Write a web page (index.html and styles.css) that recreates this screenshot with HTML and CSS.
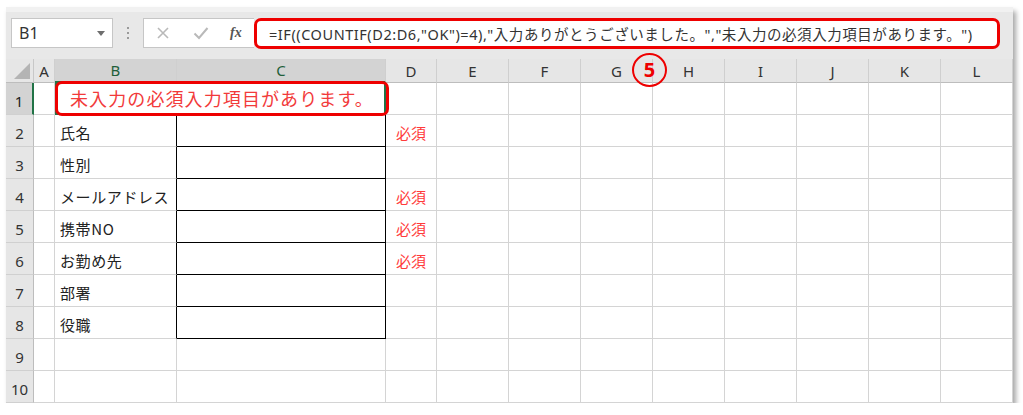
FILE: index.html
```html
<!DOCTYPE html>
<html lang="ja">
<head>
<meta charset="utf-8">
<title>Excel</title>
<link rel="stylesheet" href="styles.css">
</head>
<body>
<div class="win">
  <div class="toolbar">
    <div class="namebox"><span class="nb-text">B1</span><span class="nb-arrow"></span></div>
    <div class="sep"><span></span><span></span><span></span></div>
    <div class="fxbox">
      <svg class="ic" width="14" height="14" viewBox="0 0 14 14"><path d="M2 2 L12 12 M12 2 L2 12" stroke="#b9b9b9" stroke-width="1.6" fill="none"/></svg>
      <svg class="ic" width="16" height="14" viewBox="0 0 16 14"><path d="M1.5 7.5 L6 12 L14.5 2" stroke="#b9b9b9" stroke-width="2" fill="none"/></svg>
      <span class="fx">fx</span>
    </div>
    <div class="formula">=IF((COUNTIF(D2:D6,"OK")=4),"入力ありがとうございました。","未入力の必須入力項目があります。")</div>
  </div>
  <div class="sheet">
    <div class="corner"><span class="tri"></span></div>
    <div class="ch">A</div>
    <div class="ch sel">B</div>
    <div class="ch sel">C</div>
    <div class="ch">D</div>
    <div class="ch">E</div>
    <div class="ch">F</div>
    <div class="ch">G</div>
    <div class="ch">H</div>
    <div class="ch">I</div>
    <div class="ch">J</div>
    <div class="ch">K</div>
    <div class="ch">L</div>

    <div class="rh rsel">1</div>
    <div class="c"></div>
    <div class="c merged"><span class="msg">未入力の必須入力項目があります。</span><span class="redbox"></span></div>
    <div class="c"></div>
    <div class="c"></div><div class="c"></div><div class="c"></div><div class="c"></div><div class="c"></div><div class="c"></div><div class="c"></div><div class="c"></div>

    <div class="rh">2</div>
    <div class="c"></div><div class="c lbl">氏名</div><div class="c inp"></div><div class="c req">必須</div>
    <div class="c"></div><div class="c"></div><div class="c"></div><div class="c"></div><div class="c"></div><div class="c"></div><div class="c"></div><div class="c"></div>

    <div class="rh">3</div>
    <div class="c"></div><div class="c lbl">性別</div><div class="c inp"></div><div class="c"></div>
    <div class="c"></div><div class="c"></div><div class="c"></div><div class="c"></div><div class="c"></div><div class="c"></div><div class="c"></div><div class="c"></div>

    <div class="rh">4</div>
    <div class="c"></div><div class="c lbl">メールアドレス</div><div class="c inp"></div><div class="c req">必須</div>
    <div class="c"></div><div class="c"></div><div class="c"></div><div class="c"></div><div class="c"></div><div class="c"></div><div class="c"></div><div class="c"></div>

    <div class="rh">5</div>
    <div class="c"></div><div class="c lbl">携帯NO</div><div class="c inp"></div><div class="c req">必須</div>
    <div class="c"></div><div class="c"></div><div class="c"></div><div class="c"></div><div class="c"></div><div class="c"></div><div class="c"></div><div class="c"></div>

    <div class="rh">6</div>
    <div class="c"></div><div class="c lbl">お勤め先</div><div class="c inp"></div><div class="c req">必須</div>
    <div class="c"></div><div class="c"></div><div class="c"></div><div class="c"></div><div class="c"></div><div class="c"></div><div class="c"></div><div class="c"></div>

    <div class="rh">7</div>
    <div class="c"></div><div class="c lbl">部署</div><div class="c inp"></div><div class="c"></div>
    <div class="c"></div><div class="c"></div><div class="c"></div><div class="c"></div><div class="c"></div><div class="c"></div><div class="c"></div><div class="c"></div>

    <div class="rh">8</div>
    <div class="c"></div><div class="c lbl">役職</div><div class="c inp"></div><div class="c"></div>
    <div class="c"></div><div class="c"></div><div class="c"></div><div class="c"></div><div class="c"></div><div class="c"></div><div class="c"></div><div class="c"></div>

    <div class="rh">9</div>
    <div class="c"></div><div class="c"></div><div class="c"></div><div class="c"></div>
    <div class="c"></div><div class="c"></div><div class="c"></div><div class="c"></div><div class="c"></div><div class="c"></div><div class="c"></div><div class="c"></div>

    <div class="rh">10</div>
    <div class="c"></div><div class="c"></div><div class="c"></div><div class="c"></div>
    <div class="c"></div><div class="c"></div><div class="c"></div><div class="c"></div><div class="c"></div><div class="c"></div><div class="c"></div><div class="c"></div>
  </div>
  <div class="step">5</div>
</div>
</body>
</html>
```

FILE: styles.css
```css
* { box-sizing: border-box; }
html, body { margin: 0; padding: 0; background: #ffffff; }
body {
  font-family: "Noto Sans CJK JP", "Noto Sans", sans-serif;
  color: #222;
}
.win {
  position: relative;
  margin: 7px 0 0 6px;
  width: 1007px;
  background: #fff;
  box-shadow: 3px 4px 5px rgba(0,0,0,0.35);
}
.toolbar {
  height: 52px;
  background: linear-gradient(#f1f1f1 0, #f1f1f1 5px, #e8e8e8 5px);
  display: flex;
  align-items: flex-start;
  padding: 11px 13px 0 5px;
}
.namebox {
  width: 102px;
  height: 30px;
  background: #fff;
  border: 1px solid #c6c6c6;
  display: flex;
  align-items: center;
  justify-content: space-between;
  padding: 0 7px 0 7px;
}
.nb-text {
  font-family: "Noto Sans", sans-serif;
  font-size: 16px;
  color: #333;
}
.nb-arrow {
  width: 0; height: 0;
  border-left: 4.5px solid transparent;
  border-right: 4.5px solid transparent;
  border-top: 5px solid #6e6e6e;
}
.sep {
  width: 30px;
  height: 30px;
  display: flex;
  flex-direction: column;
  align-items: center;
  justify-content: center;
  gap: 3px;
}
.sep span {
  width: 2px; height: 2px;
  background: #9a9a9a;
}
.fxbox {
  width: 111px;
  height: 30px;
  background: #fff;
  border: 1px solid #c6c6c6;
  border-right: none;
  display: flex;
  align-items: center;
  padding-left: 12px;
  gap: 23px;
}
.fx {
  font-family: "Liberation Serif", serif;
  font-style: italic;
  font-weight: bold;
  font-size: 14px;
  color: #555;
  margin-left: -2px;
}
.formula {
  flex: 1;
  height: 31px;
  background: #fff;
  border: 3px solid #ee0000;
  border-radius: 7px;
  display: flex;
  align-items: center;
  padding-left: 12px;
  font-family: "Noto Sans", "Noto Sans CJK JP", sans-serif;
  font-size: 14.5px;
  letter-spacing: 0.55px;
  color: #333;
  white-space: nowrap;
  overflow: hidden;
}
.sheet {
  display: grid;
  grid-template-columns: 28px 21px 122px 209px 51px repeat(8, 72px);
  grid-template-rows: 24px repeat(10, 32px);
}
.corner {
  background: #e6e6e6;
  border-right: 1px solid #c8c8c8;
  border-bottom: 1px solid #bdbdbd;
  position: relative;
}
.tri {
  position: absolute;
  right: 3px; bottom: 3px;
  width: 0; height: 0;
  border-left: 16px solid transparent;
  border-bottom: 16px solid #b4b4b4;
}
.ch {
  background: #e6e6e6;
  border-right: 1px solid #cfcfcf;
  border-bottom: 1px solid #bdbdbd;
  display: flex;
  align-items: center;
  justify-content: center;
  font-family: "Noto Sans", sans-serif;
  font-size: 15px;
  color: #333;
}
.ch.sel {
  background: #d3d3d3;
  color: #1e5f3a;
  border-bottom: 2px solid #217346;
}
.rh {
  background: #e6e6e6;
  border-right: 1px solid #bdbdbd;
  border-bottom: 1px solid #d0d0d0;
  display: flex;
  align-items: center;
  justify-content: center;
  padding-top: 5px;
  font-family: "Noto Sans", sans-serif;
  font-size: 15px;
  color: #333;
}
.rh.rsel {
  background: #d3d3d3;
  border-right: 2px solid #217346;
  color: #222;
}
.c {
  border-right: 1px solid #d4d4d4;
  border-bottom: 1px solid #d4d4d4;
  display: flex;
  align-items: center;
  font-size: 15px;
}
.merged {
  grid-column: span 2;
  position: relative;
  border: 2px solid #217346;
  border-top: none;
}
.msg {
  padding-left: 13px;
  font-size: 18px;
  letter-spacing: 1.1px;
  color: #f23a3a;
  white-space: nowrap;
}
.redbox {
  position: absolute;
  left: -2px; top: -2px;
  width: 334px; height: 35px;
  border: 3px solid #ee0000;
  border-radius: 7px;
}
.lbl {
  border-right: 1px solid #000;
  padding-left: 5px;
  padding-top: 3px;
  white-space: nowrap;
  letter-spacing: 0.6px;
  color: #222;
}
.inp {
  border-right: 1px solid #000;
  border-bottom: 1px solid #000;
}
.req {
  justify-content: center;
  padding-top: 3px;
  color: #ff3b3b;
  font-size: 15px;
}
.step {
  position: absolute;
  left: 626px;
  top: 46px;
  width: 35px;
  height: 34px;
  border: 2.5px solid #ee0000;
  border-radius: 50%;
  display: flex;
  align-items: center;
  justify-content: center;
  font-family: "Noto Sans", sans-serif;
  font-weight: bold;
  font-size: 20px;
  color: #ee0000;
  line-height: 1;
}
```
